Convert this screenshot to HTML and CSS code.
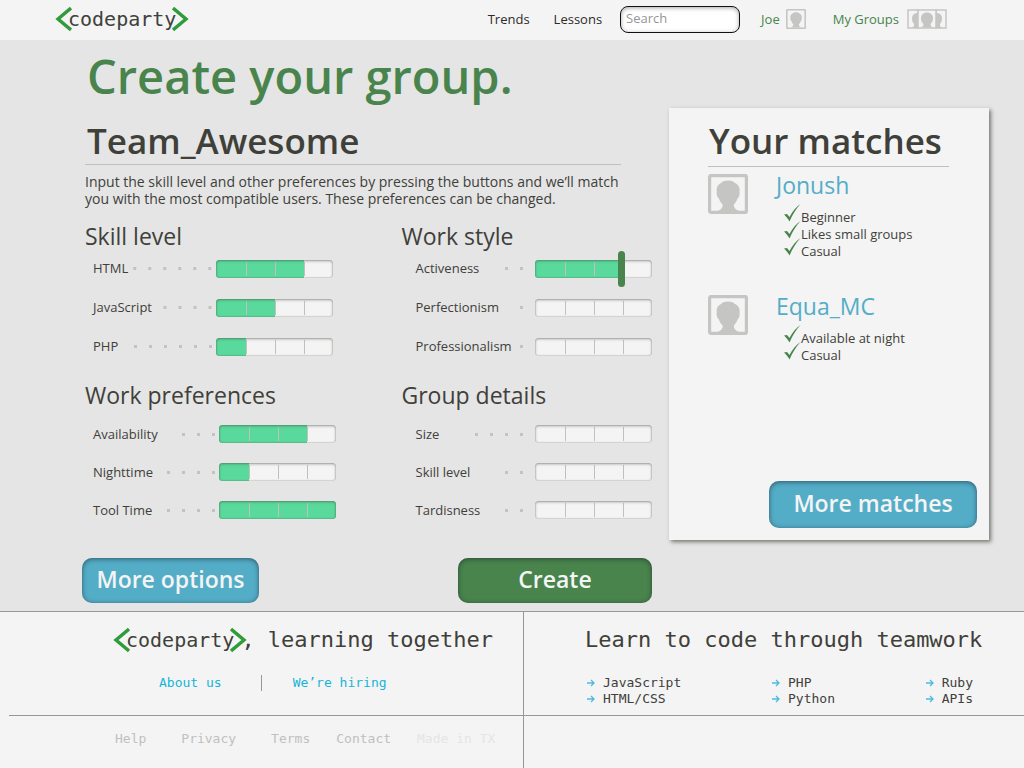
FILE: index.html
```html
<!DOCTYPE html>
<html lang="en">
<head>
<meta charset="utf-8">
<meta name="viewport" content="width=device-width, initial-scale=1">
<title>codeparty – Create your group</title>
<link rel="stylesheet" href="styles.css">
</head>
<body>
<svg class="defs" aria-hidden="true">
  <symbol id="avatar" viewBox="0 0 40 40">
    <rect x="1.5" y="1.5" width="37" height="37" rx="2" fill="#f4f4f4" stroke="#c5c5c3" stroke-width="3.4"/>
    <path d="M20 6.500c3 0 5 .8 7 2.400c3 1.500 5 4 4.600 8c.4 4-.6 6-2 7.500c-1 2.600-2.200 4.600-3.800 6c0 3 1.600 5.400 5.600 6.600H9.500c3.600-1.200 5.300-3.600 5.200-6.600c-1.700-1.400-3-3.400-3.800-6c-1.700-1.500-2.600-3.500-2.200-7.500c-.4-4 1.400-6.500 4.300-8c2-1.600 4-2.400 7-2.400z" fill="#c5c5c3"/>
  </symbol>
  <symbol id="people" viewBox="0 0 40 20">
    <path d="M1 1h10v18H1zM29 1h10v18H29z" fill="#f4f4f4" stroke="#c5c5c3" stroke-width="1.500"/>
    <path d="M11 4c-4 0-6 2-6 6c0 2 1 4 2 5v2l-2 2h6zM29 4c4 0 6 2 6 6c0 2-1 4-2 5v2l2 2h-6z" fill="#c5c5c3"/>
    <rect x="11" y="1" width="18" height="18" fill="#f4f4f4" stroke="#c5c5c3" stroke-width="1.500"/>
    <path d="M20 3.500c4 0 6 2.500 6 6c0 2.500-1 4-2.500 5.500c0 1.500 1 3 2.500 3.500H14c1.500-.5 2.500-2 2.500-3.500C15 13.500 14 12 14 9.500c0-3.500 2-6 6-6z" fill="#c5c5c3"/>
  </symbol>
  <symbol id="check" viewBox="0 0 18 18">
    <path d="M1 10.500l3-.500 2.500 3C9.500 7.500 13 3 17.500 0 13 5 9.500 10.500 6.500 17.500 5 15 3 12 1 10.500z" fill="#48844c"/>
  </symbol>
  <symbol id="left" viewBox="0 0 17 26">
    <path d="M16 2 3 13l13 11" fill="none" stroke="#309b3a" stroke-width="3.400"/>
  </symbol>
  <symbol id="right" viewBox="0 0 17 26">
    <path d="M1 2l13 11L1 24" fill="none" stroke="#309b3a" stroke-width="3.400"/>
  </symbol>
  <symbol id="arrow" viewBox="0 0 8 8">
    <path d="M0 4h7M4 1l3 3-3 3" fill="none" stroke="#4bbbe0" stroke-width="1.300"/>
  </symbol>
</svg>

<header class="topbar">
  <a class="logo" href="#"><svg class="bracket"><use href="#left"/></svg><span>codeparty</span><svg class="bracket"><use href="#right"/></svg></a>
  <nav class="nav">
    <a class="nav-link" href="#">Trends</a>
    <a class="nav-link" href="#">Lessons</a>
    <input class="search" type="search" placeholder="Search" aria-label="Search">
    <a class="nav-link account" href="#">Joe <svg class="avatar-small"><use href="#avatar"/></svg></a>
    <a class="nav-link account groups-link" href="#">My Groups <svg class="people"><use href="#people"/></svg></a>
  </nav>
</header>

<main class="page">
  <h1 class="page-title">Create your group.</h1>

  <form class="builder" id="group-form">
    <h2 class="title ruled">Team_Awesome</h2>
    <p class="intro">Input the skill level and other preferences by pressing the buttons and we’ll match you with the most compatible users. These preferences can be changed.</p>

    <div class="groups">
      <section class="inset">
        <h3 class="group-title">Skill level</h3>
        <div class="row"><label for="html">HTML</label><span class="dots" style="--n:6"></span><input class="meter" id="html" type="range" min="0" max="4" value="3" style="--level:3"></div>
        <div class="row"><label for="js">JavaScript</label><span class="dots" style="--n:4"></span><input class="meter" id="js" type="range" min="0" max="4" value="2" style="--level:2"></div>
        <div class="row"><label for="php">PHP</label><span class="dots" style="--n:6"></span><input class="meter" id="php" type="range" min="0" max="4" value="1" style="--level:1"></div>
      </section>
      <section class="spaced">
        <h3 class="group-title">Work style</h3>
        <div class="row"><label for="act">Activeness</label><span class="dots" style="--n:2"></span><input class="meter meter-active" id="act" type="range" min="0" max="4" value="3" style="--level:3"></div>
        <div class="row"><label for="perf">Perfectionism</label><span class="dots" style="--n:1"></span><input class="meter" id="perf" type="range" min="0" max="4" value="0" style="--level:0"></div>
        <div class="row"><label for="prof">Professionalism</label><span class="dots" style="--n:1"></span><input class="meter" id="prof" type="range" min="0" max="4" value="0" style="--level:0"></div>
      </section>
      <section class="lower">
        <h3 class="group-title">Work preferences</h3>
        <div class="row"><label for="avail">Availability</label><span class="dots" style="--n:3"></span><input class="meter" id="avail" type="range" min="0" max="4" value="3" style="--level:3"></div>
        <div class="row"><label for="night">Nighttime</label><span class="dots" style="--n:4"></span><input class="meter" id="night" type="range" min="0" max="4" value="1" style="--level:1"></div>
        <div class="row"><label for="tool">Tool Time</label><span class="dots" style="--n:4"></span><input class="meter" id="tool" type="range" min="0" max="4" value="4" style="--level:4"></div>
      </section>
      <section class="lower spaced">
        <h3 class="group-title">Group details</h3>
        <div class="row"><label for="size">Size</label><span class="dots" style="--n:4"></span><input class="meter" id="size" type="range" min="0" max="4" value="0" style="--level:0"></div>
        <div class="row"><label for="skill">Skill level</label><span class="dots" style="--n:2"></span><input class="meter" id="skill" type="range" min="0" max="4" value="0" style="--level:0"></div>
        <div class="row"><label for="tardis">Tardisness</label><span class="dots" style="--n:2"></span><input class="meter" id="tardis" type="range" min="0" max="4" value="0" style="--level:0"></div>
      </section>
    </div>
  </form>

  <aside class="matches">
    <h2 class="title matches-title">Your matches</h2>
    <article class="match">
      <svg class="avatar"><use href="#avatar"/></svg>
      <div>
        <h3 class="match-name"><a href="#">Jonush</a></h3>
        <ul class="traits">
          <li><svg class="check"><use href="#check"/></svg>Beginner</li>
          <li><svg class="check"><use href="#check"/></svg>Likes small groups</li>
          <li><svg class="check"><use href="#check"/></svg>Casual</li>
        </ul>
      </div>
    </article>
    <article class="match">
      <svg class="avatar"><use href="#avatar"/></svg>
      <div>
        <h3 class="match-name"><a href="#">Equa_MC</a></h3>
        <ul class="traits">
          <li><svg class="check"><use href="#check"/></svg>Available at night</li>
          <li><svg class="check"><use href="#check"/></svg>Casual</li>
        </ul>
      </div>
    </article>
    <button class="button more-matches" type="button">More matches</button>
  </aside>

  <div class="actions">
    <button class="button more-options" type="button">More options</button>
    <button class="button create" type="submit" form="group-form">Create</button>
  </div>
</main>

<footer class="footer">
  <section class="about">
    <p class="tagline"><a class="logo" href="#"><svg class="bracket"><use href="#left"/></svg><span>codeparty</span><svg class="bracket"><use href="#right"/></svg></a>, learning together</p>
    <div class="about-links">
      <a href="#">About us</a>
      <a class="divided" href="#">We’re hiring</a>
    </div>
  </section>
  <section class="learn">
    <p class="tagline">Learn to code through teamwork</p>
    <div class="topics">
      <ul>
        <li><svg class="arrow"><use href="#arrow"/></svg><a href="#">JavaScript</a></li>
        <li><svg class="arrow"><use href="#arrow"/></svg><a href="#">HTML/CSS</a></li>
      </ul>
      <ul>
        <li><svg class="arrow"><use href="#arrow"/></svg><a href="#">PHP</a></li>
        <li><svg class="arrow"><use href="#arrow"/></svg><a href="#">Python</a></li>
      </ul>
      <ul>
        <li><svg class="arrow"><use href="#arrow"/></svg><a href="#">Ruby</a></li>
        <li><svg class="arrow"><use href="#arrow"/></svg><a href="#">APIs</a></li>
      </ul>
    </div>
  </section>
  <nav class="legal">
    <a href="#">Help</a>
    <a href="#">Privacy</a>
    <a href="#">Terms</a>
    <a href="#">Contact</a>
    <span class="made">Made in TX</span>
  </nav>
  <div class="blank"></div>
</footer>
</body>
</html>
```
FILE: styles.css
```css
* { box-sizing: border-box; }

body {
  margin: 0;
  min-height: 100vh;
  display: flex;
  flex-direction: column;
  background: #e5e5e5;
  color: #40403a;
  font: 13px/17px "Trebuchet MS", "Open Sans", "Noto Sans", sans-serif;
}

h1, h2, h3, p, ul { margin: 0; padding: 0; }
ul { list-style: none; }
a { color: inherit; text-decoration: none; }
.defs { position: absolute; width: 0; height: 0; }

/* Header */
.topbar {
  height: 40px;
  padding: 0 77px 2px 55px;
  display: flex;
  align-items: center;
  justify-content: space-between;
  background: #f4f4f4;
}
.logo {
  display: inline-flex;
  align-items: center;
  color: #40403a;
  font: 20px/24px Consolas, "DejaVu Sans Mono", monospace;
}
.bracket { width: 17px; height: 26px; flex: none; }
.logo span { margin: 0 -4px; }
.nav { display: flex; align-items: center; }
.nav-link { margin-right: 24px; color: #2b2b2b; }
.search {
  width: 120px;
  height: 27px;
  margin-right: 21px;
  margin-left: -6px;
  padding: 0 5px 2px;
  border: 1px solid #111;
  border-radius: 8px;
  background: #fff;
  box-shadow: inset 0 1px 4px rgba(0, 0, 0, .35);
  font: inherit;
}
.search::placeholder { color: #969696; opacity: 1; }
.account { display: flex; align-items: center; gap: 6px; margin-right: 27px; color: #48844c; }
.groups-link { gap: 8px; margin-right: 0; }
.avatar-small { width: 20px; height: 20px; }
.people { width: 40px; height: 20px; }

/* Page grid */
.page {
  display: grid;
  grid-template-columns: minmax(0, 1fr) 320px;
  column-gap: 17px;
  padding: 0 35px 8px 85px;
}
.page-title {
  grid-column: 1 / -1;
  height: 68px;
  padding-left: 2px;
  color: #48844c;
  font-size: 47px;
  font-weight: 600;
  line-height: 72px;
}
.title { font-size: 35px; font-weight: 600; }
.ruled { margin-right: 31px; padding: 10px 0 0 2px; line-height: 46px; border-bottom: 1px solid #c0c0c0; }
.intro { margin: 8px 31px 0 0; font-size: 14px; }

.groups {
  display: grid;
  grid-template-columns: repeat(2, minmax(0, 1fr));
  gap: 13px 66px;
  margin-top: 13px;
}
.group-title { margin-bottom: -3px; font-size: 23px; font-weight: 400; line-height: 32px; }
.lower .group-title { margin-bottom: 4px; }
.row {
  height: 39px;
  padding-left: 8px;
  display: flex;
  align-items: center;
}
.lower .row { height: 38px; }
.inset .row { padding-right: 3px; }
.spaced .row { padding-left: 14px; }
.dots {
  width: calc(var(--n) * 15px);
  height: 3px;
  margin: 0 4px 0 auto;
  background: linear-gradient(90deg, transparent 12px, #c2c2c2 12px) 100% 0 / 15px 3px repeat-x;
}
.spaced .dots { margin-right: 12px; }

.meter {
  appearance: none;
  width: 117px;
  height: 18px;
  flex: none;
  margin: 0;
  border-radius: 3px;
  background:
    linear-gradient(#c0c0c0, #c0c0c0) 30px 2px / 1px 14px no-repeat,
    linear-gradient(#c0c0c0, #c0c0c0) 59px 2px / 1px 14px no-repeat,
    linear-gradient(#c0c0c0, #c0c0c0) 88px 2px / 1px 14px no-repeat,
    linear-gradient(#5ad99c, #5ad99c) 0 0 / min(var(--level) * 30px, var(--level) * 29px + 1px) 18px no-repeat,
    #f4f4f4;
  box-shadow: inset 0 0 1px 1px rgba(70, 70, 60, .14), inset 0 1px 3px rgba(70, 70, 60, .45);
}
.meter::-webkit-slider-thumb { appearance: none; width: 7px; height: 36px; border-radius: 4px; background: transparent; }
.meter-active::-webkit-slider-thumb { background: #48844c; }

/* Matches */
.matches {
  display: flex;
  flex-direction: column;
  min-height: 432px;
  padding: 2px 12px 12px 39px;
  background: #f4f4f4;
  box-shadow: 2px 2px 4px rgba(60, 60, 50, .65);
}
.matches-title { margin-right: 28px; padding: 6px 0 0 1px; line-height: 50px; border-bottom: 1px solid #c0c0c0; }
.match {
  display: grid;
  grid-template-columns: 40px 1fr;
  column-gap: 28px;
  padding-top: 7px;
  min-height: 121px;
}
.avatar { width: 40px; height: 40px; }
.match-name { color: #53adc7; font-size: 23px; font-weight: 400; line-height: 23px; }
.traits { padding: 12px 0 0 7px; }
.traits li { display: flex; }
.check { width: 18px; height: 18px; margin-top: -5px; flex: none; }

/* Buttons */
.button {
  height: 45px;
  padding: 0 14px 3px;
  border: 0;
  border-radius: 10px;
  background: #53adc7;
  box-shadow: inset 0 1px 5px rgba(30, 40, 50, .65);
  color: #f4f4f4;
  font: 600 23px/28px "Trebuchet MS", "Open Sans", "Noto Sans", sans-serif;
}
.more-matches { width: 208px; height: 47px; margin: auto 0 0 auto; }
.actions { display: flex; justify-content: space-between; margin: 18px 0 0 -3px; }
.more-options { width: 177px; padding-inline: 0; }
.create { width: 194px; background: #48844c; }

/* Footer */
.footer {
  flex: 1;
  display: grid;
  grid-template-columns: 523fr 501fr;
  grid-template-rows: auto 1fr;
  border-top: 1px solid #979797;
  background: #f4f4f4;
  font: 13px/16px Consolas, "DejaVu Sans Mono", monospace;
}
.about, .learn { padding-bottom: 8px; border-bottom: 1px solid #979797; }
.about { margin-left: 9px; padding-left: 104px; }
.learn, .blank { border-left: 1px solid #979797; }
.learn { padding-left: 61px; }
.tagline { display: flex; align-items: center; height: 56px; font-size: 22px; line-height: 28px; white-space: pre; }
.tagline .logo { margin-right: -6px; }
.about-links { display: flex; padding: 7px 0 0 46px; color: #18b4d6; }
.divided { margin-left: 39px; padding-left: 31px; border-left: 1px solid #979797; }
.topics { display: flex; justify-content: space-between; padding: 7px 51px 0 2px; }
.topics li { display: flex; align-items: center; gap: 8px; }
.arrow { width: 8px; height: 8px; }
.legal { display: flex; padding: 15px 0 0 115px; color: #c0c0c0; }
.legal > * { margin-right: 35px; }
.legal > :nth-child(n+3) { margin-right: 26px; }
.legal .made { margin: 0; color: #e5e5e5; }
```
